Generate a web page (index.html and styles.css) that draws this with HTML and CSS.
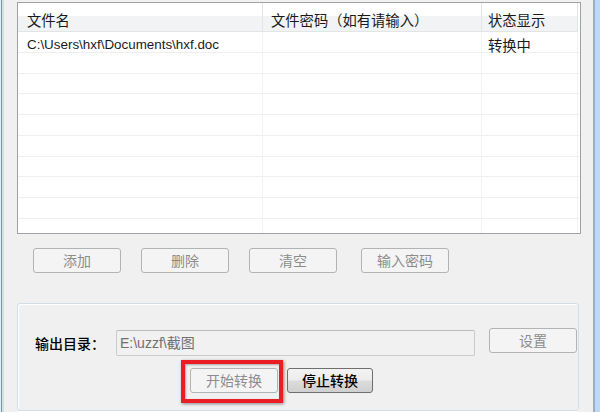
FILE: index.html
```html
<!DOCTYPE html>
<html lang="zh-CN">
<head>
<meta charset="utf-8">
<title>转换</title>
<link rel="stylesheet" href="styles.css">
</head>
<body>
<div class="window">
  <div class="frame-left"></div>
  <div class="client">
    <div class="listview">
      <div class="lv-header">
        <div class="hcell c1">文件名</div>
        <div class="hcell c2">文件密码（如有请输入）</div>
        <div class="hcell c3">状态显示</div>
        <div class="hcell c4"></div>
      </div>
      <div class="lv-body">
        <div class="row">
          <div class="cell c1 path">C:\Users\hxf\Documents\hxf.doc</div>
          <div class="cell c2"></div>
          <div class="cell c3">转换中</div>
          <div class="cell c4"></div>
        </div>
        <div class="row"><div class="cell c1"></div><div class="cell c2"></div><div class="cell c3"></div><div class="cell c4"></div></div>
        <div class="row"><div class="cell c1"></div><div class="cell c2"></div><div class="cell c3"></div><div class="cell c4"></div></div>
        <div class="row"><div class="cell c1"></div><div class="cell c2"></div><div class="cell c3"></div><div class="cell c4"></div></div>
        <div class="row"><div class="cell c1"></div><div class="cell c2"></div><div class="cell c3"></div><div class="cell c4"></div></div>
        <div class="row"><div class="cell c1"></div><div class="cell c2"></div><div class="cell c3"></div><div class="cell c4"></div></div>
        <div class="row"><div class="cell c1"></div><div class="cell c2"></div><div class="cell c3"></div><div class="cell c4"></div></div>
        <div class="row"><div class="cell c1"></div><div class="cell c2"></div><div class="cell c3"></div><div class="cell c4"></div></div>
        <div class="row"><div class="cell c1"></div><div class="cell c2"></div><div class="cell c3"></div><div class="cell c4"></div></div>
        <div class="row last"><div class="cell c1"></div><div class="cell c2"></div><div class="cell c3"></div><div class="cell c4"></div></div>
      </div>
    </div>

    <div class="btn-row">
      <button class="btn disabled">添加</button>
      <button class="btn disabled">删除</button>
      <button class="btn disabled">清空</button>
      <button class="btn disabled btn-last">输入密码</button>
    </div>

    <div class="group">
      <div class="out-row">
        <span class="out-label">输出目录：</span>
        <div class="textbox">E:\uzzf\截图</div>
        <button class="btn disabled btn-set">设置</button>
      </div>
      <div class="action-row">
        <div class="highlight-wrap">
          <button class="btn disabled">开始转换</button>
          <div class="red-box"></div>
        </div>
        <button class="btn enabled">停止转换</button>
      </div>
    </div>
  </div>
  <div class="frame-right"></div>
</div>
</body>
</html>
```

FILE: styles.css
```css
* { box-sizing: border-box; }

html, body {
  margin: 0;
  padding: 0;
  background: #f0f0f0;
}

body {
  font-family: "Noto Sans CJK SC", "Liberation Sans", sans-serif;
  font-size: 14px;
  color: #1a1a1a;
}

.window {
  display: flex;
  width: 600px;
  height: 412px;
  overflow: hidden;
  background: #f0f0f0;
}

.frame-left {
  width: 4px;
  flex: none;
  background: linear-gradient(to right, #e3ecf6 0 1px, #7393bd 1px 2px, #cfe0f3 2px 4px);
}

.frame-right {
  width: 7px;
  flex: none;
  background: linear-gradient(to right, #a6a9ad 0 1px, #8fb1d8 1px 2px, #bdd9f6 2px 7px);
}

.client {
  flex: 1;
  padding: 2px 0 0 13px;
}

/* list view */
.listview {
  width: 564px;
  height: 232px;
  border: 1px solid #9ea1a5;
  background: #fff;
}

.lv-header {
  display: grid;
  grid-template-columns: 245px 219px 96px 2px;
  height: 29px;
}

.hcell {
  height: 29px;
  padding-top: 4px;
  display: flex;
  align-items: center;
  background: linear-gradient(#ffffff 0 45%, #f2f3f5 45% 100%);
  border-bottom: 1px solid #e3e4e6;
  border-right: 1px solid #e3e4e6;
  white-space: nowrap;
  color: #1a1a1a;
  font-size: 14.3px;
}

.hcell.c4 {
  background: #fff;
  border: none;
}

.c1 { padding-left: 9px; }
.c2 { padding-left: 8px; }
.c3 { padding-left: 6px; }

.lv-body {
  height: 201px;
  overflow: hidden;
}

.row {
  display: grid;
  grid-template-columns: 245px 219px 96px 2px;
  height: 20.75px;
  border-bottom: 1px solid #efefef;
}

.row.last {
  height: 16px;
  border-bottom: none;
}

.cell {
  display: flex;
  align-items: center;
  padding-top: 2px;
  border-right: 1px solid #f1f1f1;
  white-space: nowrap;
  color: #1a1a1a;
  font-size: 14.3px;
}

.cell.c4 { border-right: none; }

.cell.path {
  font-family: "Liberation Sans", sans-serif;
  font-size: 13.4px;
}

/* buttons */
.btn {
  height: 25px;
  width: 88px;
  padding: 0;
  font-family: "Noto Sans CJK SC", "Liberation Sans", sans-serif;
  font-size: 14px;
  border-radius: 3px;
  line-height: 23px;
}

.btn.disabled {
  border: 1px solid #b1b4b7;
  background: #f4f4f4;
  color: #8c8c8c;
}

.btn.enabled {
  width: 86px;
  border: 1px solid #6f6f6f;
  background: linear-gradient(#f3f3f3 0, #ececec 48%, #dcdcdc 52%, #d0d0d0 100%);
  color: #000;
  font-weight: 500;
}

.btn-row {
  display: flex;
  gap: 20px;
  margin-top: 14px;
  padding-left: 16px;
}

.btn-last { margin-left: 4px; }

/* group box */
.group {
  margin-top: 30px;
  width: 562px;
  height: 108px;
  border: 1px solid #d6dde2;
  border-radius: 3px;
  box-shadow: inset 1px 1px 0 #fff, 0 1px 0 #fff;
}

.out-row {
  display: flex;
  align-items: flex-start;
  padding: 24px 0 0 17px;
}

.out-label {
  width: 70px;
  margin-top: 2px;
  line-height: 26px;
  color: #000;
  font-weight: 500;
  white-space: nowrap;
}

.textbox {
  margin: 2px 0 0 11px;
  width: 359px;
  height: 26px;
  border: 1px solid #c9cbcd;
  border-top-color: #b9bcbf;
  border-radius: 2px;
  background: #f1f1f1;
  color: #707070;
  font-family: "Liberation Sans", "Noto Sans CJK SC", sans-serif;
  font-size: 14px;
  line-height: 24px;
  padding-left: 3px;
  white-space: nowrap;
}

.btn-set { margin-left: 14px; }

.action-row {
  display: flex;
  gap: 9px;
  margin-top: 12px;
  padding-left: 172px;
}

.highlight-wrap {
  position: relative;
}

.highlight-wrap .btn { display: block; }

.red-box {
  position: absolute;
  left: -9px;
  top: -8px;
  width: 102px;
  height: 43px;
  border: 4px solid #ea1d25;
  box-shadow: 1px 1px 3px rgba(0, 0, 0, 0.45), inset 1px 1px 2px rgba(0, 0, 0, 0.3);
  pointer-events: none;
}
```
